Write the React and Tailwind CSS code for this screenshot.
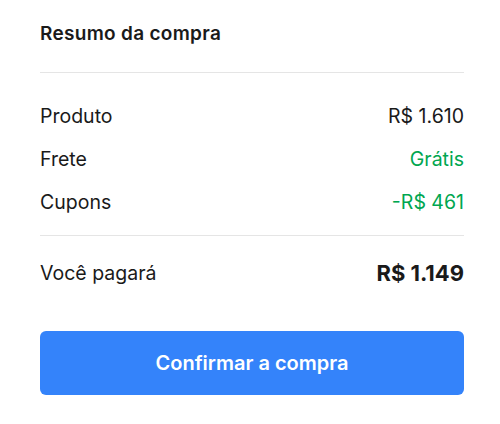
export default function App() {
  const font = { fontFamily: '"Inter", "Noto Sans", sans-serif' };
  return (
    <div className="w-[500px] h-[424px] bg-white pl-10 pr-9 text-[#1a1a1a]" style={font}>
      <div className="pt-[22px] text-[19px] leading-6 font-semibold tracking-[0.3px]">Resumo da compra</div>
      <div className="mt-[26px] h-px bg-[#e5e5e5]" />
      <div className="mt-[22px] text-[19.5px]">
        <div className="h-[43px] flex items-center justify-between">
          <span>Produto</span>
          <span>R$ 1.610</span>
        </div>
        <div className="h-[43px] flex items-center justify-between">
          <span>Frete</span>
          <span className="text-[#00a650]">Grátis</span>
        </div>
        <div className="h-[43px] flex items-center justify-between">
          <span>Cupons</span>
          <span className="text-[#00a650]">-R$ 461</span>
        </div>
      </div>
      <div className="mt-[11px] h-px bg-[#e5e5e5]" />
      <div className="mt-[16px] h-[43px] flex items-center justify-between">
        <span className="text-[19.5px]">Você pagará</span>
        <span className="text-[22px] font-bold">R$ 1.149</span>
      </div>
      <button className="mt-[36px] w-full h-16 rounded-md bg-[#3483fa] text-white text-[20px] font-semibold flex items-center justify-center">
        Confirmar a compra
      </button>
    </div>
  );
}
